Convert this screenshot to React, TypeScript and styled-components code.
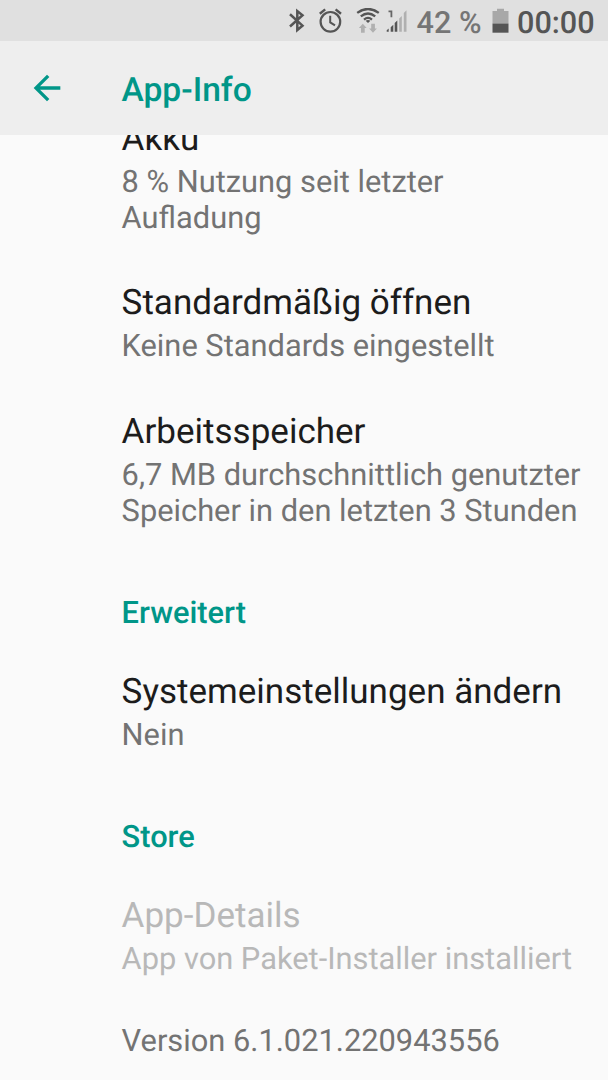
import React from "react";
import styled, { createGlobalStyle } from "styled-components";

const Global = createGlobalStyle`
  html, body { margin: 0; padding: 0; overflow: hidden; background: #fafafa; }
  * { box-sizing: border-box; }
`;

const Screen = styled.div`
  width: 608px;
  height: 1080px;
  display: flex;
  flex-direction: column;
  overflow: hidden;
  background: #fafafa;
  font-family: Roboto, sans-serif;
  text-rendering: geometricPrecision;
`;

const StatusBar = styled.div`
  flex: none;
  height: 41px;
  padding: 0 13px 0 288px;
  display: flex;
  align-items: center;
  background: #e0e0e0;
`;

const StatusIcon = styled.svg<{ $gap: number }>`
  flex: none;
  display: block;
  margin-right: ${(p) => p.$gap}px;
`;

const StatusText = styled.span<{ $color: string; $width: number }>`
  flex: none;
  width: ${(p) => p.$width}px;
  margin-top: 6px;
  font-size: 30.6px;
  line-height: 38px;
  font-weight: 500;
  white-space: nowrap;
  color: ${(p) => p.$color};
`;

const Toolbar = styled.header`
  flex: none;
  height: 94px;
  padding: 1px 0 0 27px;
  display: flex;
  align-items: center;
  background: #eeeeee;
`;

const BackIcon = styled.svg`
  display: block;
  margin: -2px 54.5px 0 0;
`;

const ToolbarTitle = styled.h1`
  margin: 4px 0 0;
  font-size: 33.6px;
  line-height: 40px;
  font-weight: 500;
  color: #009688;
`;

const Content = styled.main`
  flex: 1;
  min-height: 0;
  overflow: hidden;
  padding-left: 121.6px;
`;

const Scrolled = styled.div`
  margin-top: -17.5px;
`;

const Preference = styled.section`
  margin-bottom: 46.4px;
`;

const Title = styled.h2<{ $disabled?: boolean }>`
  margin: 0 0 5.2px;
  font-size: 35.03px;
  line-height: 41px;
  font-weight: 400;
  color: ${(p) => (p.$disabled ? "#b8b8b8" : "#1c1c1c")};
  white-space: nowrap;
`;

const Summary = styled.p<{ $disabled?: boolean }>`
  margin: 0;
  font-size: 30.82px;
  line-height: 36px;
  font-weight: 400;
  color: ${(p) => (p.$disabled ? "#b8b8b8" : "#737373")};
  white-space: nowrap;
`;

const Category = styled.h3`
  margin: 66.4px 0 39.4px;
  font-size: 30.8px;
  line-height: 36px;
  font-weight: 500;
  color: #009688;
`;

type ItemProps = { title: string; lines: string[]; disabled?: boolean };

const Item = ({ title, lines, disabled }: ItemProps) => (
  <Preference>
    <Title $disabled={disabled}>{title}</Title>
    {lines.map((line) => (
      <Summary key={line} $disabled={disabled}>
        {line}
      </Summary>
    ))}
  </Preference>
);

const Bluetooth = () => (
  <StatusIcon $gap={14} width="17" height="26" viewBox="0 0 17 26">
    <path
      d="M2 6.300 14.500 17.600 9.300 22V3L14.500 7.200 2 18.500"
      fill="none"
      stroke="#555"
      strokeWidth="2.5"
    />
  </StatusIcon>
);

const Alarm = () => (
  <StatusIcon $gap={13} width="24" height="26" viewBox="0 0 24 26">
    <g fill="none" stroke="#555" strokeWidth="2.2">
      <circle cx="11.4" cy="13.8" r="9.800" />
      <path d="M11.200 7.800v6.600l4.800 3" strokeWidth="2" />
      <path d="M.8 5.800 6.200 1.400M22 5.800 16.600 1.400" strokeWidth="2.400" />
    </g>
  </StatusIcon>
);

const Wifi = () => (
  <StatusIcon $gap={6} width="24" height="26" viewBox="0 0 24 26">
    <g fill="none" stroke="#555" strokeWidth="2.3">
      <path d="M1.200 4.900Q12-3 22.800 4.900" />
      <path d="M4.800 8.400Q12 2.600 19.200 8.400" />
      <path d="M8 11.600Q12 8.200 16 11.600" />
    </g>
    <path d="M9.600 12.700q2.400-1.600 4.800 0L12 15z" fill="#555" />
    <path
      d="M6.800 15.700l3.900 4.200H8.700v4.800H5v-4.800H2.900zM17 24.700l-3.900-4.200h2.100v-4.800h3.700v4.800h2z"
      fill="#b0b0b0"
    />
  </StatusIcon>
);

const Signal = () => (
  <StatusIcon $gap={9.5} width="21" height="26" viewBox="0 0 21 26">
    <path d="M2.500 3.300H5.400V9.300" fill="none" stroke="#666" strokeWidth="1.800" />
    <path
      d="M.7 23.800v-1.500l2-1.800v3.300zM4.700 23.800v-4.500l2.600-2.600v7.100zM8.700 23.800v-8.800l2.600-2.600v11.400z"
      fill="#555"
    />
    <path d="M13.200 23.800V10.500l2.600-2.600v15.900zM17.800 23.800V5l2.700-2.800v21.600z" fill="#b0b0b0" />
  </StatusIcon>
);

const Battery = () => (
  <StatusIcon $gap={8.5} width="17" height="26" viewBox="0 0 17 26">
    <path d="M.5 3H5V.7h7V3h4.500v12.500H.5z" fill="#a8a8a8" />
    <path d="M.5 15.500h16v9.200H.5z" fill="#555" />
  </StatusIcon>
);

export default function App() {
  return (
    <>
      <Global />
      <Screen>
        <StatusBar>
          <Bluetooth />
          <Alarm />
          <Wifi />
          <Signal />
          <StatusText $color="#757575" $width={75}>
            42 %
          </StatusText>
          <Battery />
          <StatusText $color="#555555" $width={77}>
            00:00
          </StatusText>
        </StatusBar>
        <Toolbar>
          <BackIcon width="40" height="40" viewBox="0 0 24 24" fill="#009688">
            <path d="M20 11H7.830l5.590-5.590L12 4l-8 8 8 8 1.410-1.410L7.830 13H20v-2z" />
          </BackIcon>
          <ToolbarTitle>App-Info</ToolbarTitle>
        </Toolbar>
        <Content>
          <Scrolled>
            <Item title="Akku" lines={["8 % Nutzung seit letzter", "Aufladung"]} />
            <Item title="Standardmäßig öffnen" lines={["Keine Standards eingestellt"]} />
            <Item
              title="Arbeitsspeicher"
              lines={["6,7 MB durchschnittlich genutzter", "Speicher in den letzten 3 Stunden"]}
            />
            <Category>Erweitert</Category>
            <Item title="Systemeinstellungen ändern" lines={["Nein"]} />
            <Category>Store</Category>
            <Item
              title="App-Details"
              lines={["App von Paket-Installer installiert"]}
              disabled
            />
            <Summary>Version 6.1.021.220943556</Summary>
          </Scrolled>
        </Content>
      </Screen>
    </>
  );
}
